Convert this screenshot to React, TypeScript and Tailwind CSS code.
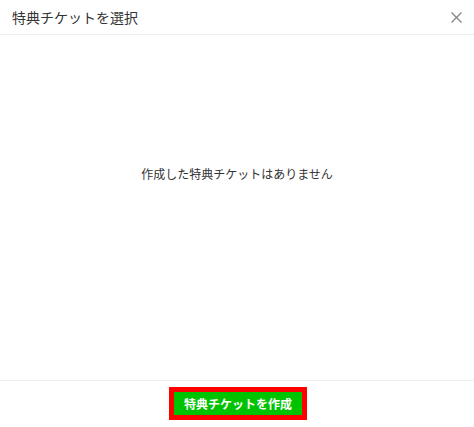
export default function App() {
  return (
    <div
      className="flex h-[427px] w-[474px] flex-col bg-white text-[#333]"
      style={{ fontFamily: '"Noto Sans CJK JP", "Noto Sans", sans-serif' }}
    >
      {/* Header */}
      <div className="flex h-[35px] shrink-0 items-center justify-between border-b border-[#eeeeee] pl-3 pr-[8px]">
        <span className="text-[14px] leading-none">特典チケットを選択</span>
        <button className="flex h-[20px] w-[20px] items-center justify-center text-[#888]" aria-label="close">
          <svg width="11" height="11" viewBox="0 0 11 11" stroke="currentColor" strokeWidth="1.4" fill="none">
            <path d="M0.5 0.5l10 10M10.5 0.5l-10 10" />
          </svg>
        </button>
      </div>

      {/* Body */}
      <div className="flex-1 pt-[130px] text-center">
        <p className="text-[12px] leading-[18px] text-[#333]">作成した特典チケットはありません</p>
      </div>

      {/* Footer */}
      <div className="flex h-[47px] shrink-0 justify-center border-t border-[#eeeeee] pl-[2px] pt-[6px]">
        <button className="h-[33px] w-[138px] border-[5px] border-[#ff0000] bg-[#00c300] text-[12px] font-bold text-white">
          特典チケットを作成
        </button>
      </div>
    </div>
  );
}
